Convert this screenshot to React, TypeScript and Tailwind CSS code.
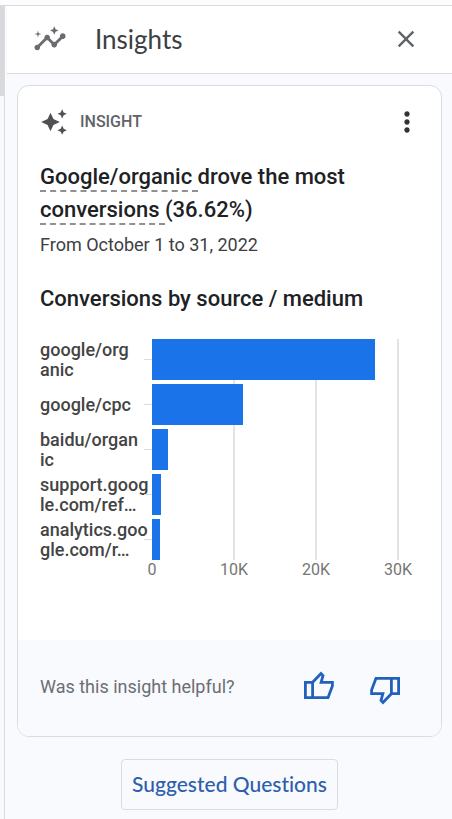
import React from 'react'
import { MdAutoAwesome, MdClose, MdInsights, MdMoreVert } from 'react-icons/md'

const MAX_VALUE = 30000

const ticks = [
  ['0', 0],
  ['10K', 10000],
  ['20K', 20000],
  ['30K', 30000],
] as const

const sources = [
  { lines: ['google/org', 'anic'], value: 27200 },
  { lines: ['google/cpc'], value: 11100 },
  { lines: ['baidu/organ', 'ic'], value: 1950 },
  { lines: ['support.goog', 'le.com/ref…'], value: 1080 },
  { lines: ['analytics.goo', 'gle.com/r…'], value: 980 },
]

const percent = (value: number) => `${(value / MAX_VALUE) * 100}%`

function ThumbIcon({ className = '' }: { className?: string }) {
  return (
    <svg
      viewBox="0 0 32 34"
      className={`h-[34px] w-8 ${className}`}
      fill="none"
      stroke="currentColor"
      strokeWidth="2.8"
      aria-hidden="true"
    >
      <path d="M2.4 11.3H9.6L18 2.6l2 2-1.9 6.7h11.3v3.6L25 26.7H2.4z" />
      <path d="M9.6 11.3v15.4" />
    </svg>
  )
}

function Header() {
  return (
    <header className="flex h-[68px] items-center border-b border-[#dadce0] bg-white pr-8 pb-0.5 pl-[26px]">
      <MdInsights className="size-[34px] text-[#6b6c6f]" />
      <h1 className="ml-7 flex-1 font-[Lato,sans-serif] text-[26px] leading-8 text-[#3c4043]">
        Insights
      </h1>
      <button type="button" aria-label="Close" className="text-[#5f6368]">
        <MdClose className="size-7" />
      </button>
    </header>
  )
}

function Mention({ children }: { children: React.ReactNode }) {
  return (
    <span className="inline-block h-8 border-b-2 border-dashed border-[#8f9194] whitespace-pre">
      {children}
    </span>
  )
}

function SourceChart() {
  return (
    <div className="mt-6 mr-[21px]">
      <div className="flex">
        {/* Source labels */}
        <div className="flex w-28 shrink-0 flex-col gap-1">
          {sources.map(({ lines }) => (
            <div
              key={lines[0]}
              className="h-[41px] content-center text-lg leading-5 font-medium text-[#444]"
            >
              {lines.map((line) => (
                <div key={line}>{line}</div>
              ))}
            </div>
          ))}
        </div>

        {/* Plot area */}
        <div className="relative flex flex-1 flex-col gap-1">
          {ticks.slice(1).map(([label, value]) => (
            <span
              key={label}
              style={{ left: percent(value) }}
              className="absolute top-0 bottom-0 w-0.5 -translate-x-1/2 bg-[#e4e4e4]"
            />
          ))}
          {sources.map(({ lines, value }) => (
            <div key={lines[0]} className="relative h-[41px]">
              <span className="absolute top-5 -left-2 h-px w-2 bg-[#dcdcdc]" />
              <div
                style={{ width: percent(value) }}
                className="h-full bg-[#1a73e8]"
              />
            </div>
          ))}
        </div>
      </div>

      {/* Axis */}
      <div className="relative ml-28 h-6 text-base leading-5 text-[#757575]">
        {ticks.map(([label, value]) => (
          <span
            key={label}
            style={{ left: percent(value) }}
            className="absolute top-0 -translate-x-1/2"
          >
            {label}
          </span>
        ))}
      </div>
    </div>
  )
}

function InsightCard() {
  return (
    <article className="overflow-hidden rounded-xl border border-[#dadce0] bg-white">
      <div className="px-[22px] pt-[22px] pb-14">
        <div className="flex h-7 items-center">
          <MdAutoAwesome className="size-7 text-[#4f5054]" />
          <span className="ml-3 flex-1 text-base font-medium text-[#5f6368]">
            INSIGHT
          </span>
          <button
            type="button"
            aria-label="More options"
            className="-mr-1 text-[#333]"
          >
            <MdMoreVert className="size-8" />
          </button>
        </div>

        <h2 className="mt-6 text-[22px] leading-[33px] font-medium text-[#202124]">
          <Mention>Google/organic </Mention>drove the most
          <br />
          <Mention>conversions </Mention>(36.62%)
        </h2>
        <p className="mt-[7px] text-lg leading-6 text-[#3c4043]">
          From October 1 to 31, 2022
        </p>

        <h3 className="mt-[26px] text-[22px] leading-8 font-medium text-[#202124]">
          Conversions by source / medium
        </h3>
        <SourceChart />
      </div>

      <footer className="flex h-24 items-center bg-[#f8fafe] px-[22px]">
        <p className="flex-1 pb-0.5 text-lg text-[#6b6e73]">
          Was this insight helpful?
        </p>
        <button type="button" aria-label="Helpful" className="text-[#2160bd]">
          <ThumbIcon />
        </button>
        <button
          type="button"
          aria-label="Not helpful"
          className="mr-[18px] ml-[34px] text-[#2160bd]"
        >
          <ThumbIcon className="rotate-180" />
        </button>
      </footer>
    </article>
  )
}

export default function App() {
  return (
    <div className="flex min-h-screen flex-col bg-[#fdfdfe] pt-[5px] font-[Roboto,sans-serif]">
      <div className="flex flex-1 border-t border-[#dadce0]">
        {/* Edge of the page behind the panel */}
        <div className="w-[5px] shrink-0 border-r border-[#dadce0] bg-[#f8f9fb]">
          <div className="h-[90px] bg-[#d9d9db]" />
        </div>

        <section className="min-w-0 flex-1 bg-[#f8fafe] pl-0.5">
          <Header />
          <div className="px-2.5 pt-[11px] pb-2">
            <InsightCard />
            <div className="mt-[22px] flex justify-center">
              <button
                type="button"
                className="h-[51px] rounded border border-[#dadce0] px-2.5 pb-0.5 font-[Lato,sans-serif] text-[21px] font-medium text-[#2f5fac] [font-variant-ligatures:none]"
              >
                Suggested Questions
              </button>
            </div>
          </div>
        </section>
      </div>
    </div>
  )
}
